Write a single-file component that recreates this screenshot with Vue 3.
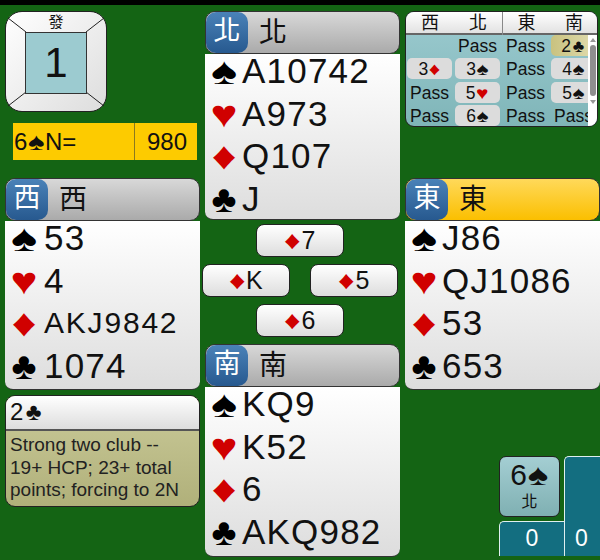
<script setup>
const north = [
  { s: "♠", c: "black", t: "A10742" },
  { s: "♥", c: "red", t: "A973" },
  { s: "♦", c: "red", t: "Q107" },
  { s: "♣", c: "black", t: "J" },
];
const west = [
  { s: "♠", c: "black", t: "53" },
  { s: "♥", c: "red", t: "4" },
  { s: "♦", c: "red", t: "AKJ9842", small: true },
  { s: "♣", c: "black", t: "1074" },
];
const east = [
  { s: "♠", c: "black", t: "J86" },
  { s: "♥", c: "red", t: "QJ1086" },
  { s: "♦", c: "red", t: "53" },
  { s: "♣", c: "black", t: "653" },
];
const south = [
  { s: "♠", c: "black", t: "KQ9" },
  { s: "♥", c: "red", t: "K52" },
  { s: "♦", c: "red", t: "6" },
  { s: "♣", c: "black", t: "AKQ982" },
];
const hands = { north, west, east, south };

const auction = [
  [{}, { t: "Pass" }, { t: "Pass" }, { n: "2", s: "♣", cur: true }],
  [{ n: "3", s: "♦", red: true }, { n: "3", s: "♠" }, { t: "Pass" }, { n: "4", s: "♠" }],
  [{ t: "Pass" }, { n: "5", s: "♥", red: true }, { t: "Pass" }, { n: "5", s: "♠" }],
  [{ t: "Pass" }, { n: "6", s: "♠" }, { t: "Pass" }, { t: "Pass" }],
];

const suitClass = { "♠": "sp", "♥": "he", "♦": "di", "♣": "cl" };
</script>

<template>
  <div class="table">
    <div class="col">
      <div class="dealer">
        <svg class="dealer-frame" width="102" height="102" viewBox="0 0 102 102">
          <path d="M3 7 L21 21 M99 7 L81 21 M3 95 L21 81 M99 95 L81 81" stroke="#222" stroke-width="1" />
        </svg>
        <div class="dealer-label">發</div>
        <div class="dealer-num">1</div>
      </div>
      <div class="contract">
        <span class="contract-name">6<span class="suit-s sp">♠</span>N=</span>
        <span class="contract-score">980</span>
      </div>
      <div class="hand west">
        <div class="hand-head">
          <span class="seat">西</span><span class="seat-name">西</span>
        </div>
        <div class="hand-body">
          <div v-for="r in hands.west" :key="r.s" class="suit-row">
            <span class="suit" :class="[r.c, suitClass[r.s]]">{{ r.s }}</span>
            <span class="cards" :class="{ small: r.small }">{{ r.t }}</span>
          </div>
        </div>
      </div>
      <div class="explain">
        <div class="explain-head">2<span class="suit-s cl">♣</span></div>
        <div class="explain-text">Strong two club -- 19+ HCP; 23+ total points; forcing to 2N</div>
      </div>
    </div>

    <div class="col mid">
      <div class="hand north">
        <div class="hand-head">
          <span class="seat">北</span><span class="seat-name">北</span>
        </div>
        <div class="hand-body">
          <div v-for="r in hands.north" :key="r.s" class="suit-row">
            <span class="suit" :class="[r.c, suitClass[r.s]]">{{ r.s }}</span>
            <span class="cards">{{ r.t }}</span>
          </div>
        </div>
      </div>
      <div class="trick">
        <div class="played"><span class="red suit-s di">♦</span>7</div>
        <div class="trick-mid">
          <div class="played"><span class="red suit-s di">♦</span>K</div>
          <div class="played"><span class="red suit-s di">♦</span>5</div>
        </div>
        <div class="played"><span class="red suit-s di">♦</span>6</div>
      </div>
      <div class="hand south">
        <div class="hand-head">
          <span class="seat">南</span><span class="seat-name">南</span>
        </div>
        <div class="hand-body">
          <div v-for="r in hands.south" :key="r.s" class="suit-row">
            <span class="suit" :class="[r.c, suitClass[r.s]]">{{ r.s }}</span>
            <span class="cards">{{ r.t }}</span>
          </div>
        </div>
      </div>
    </div>

    <div class="col right">
      <div class="auction">
        <div class="auction-head">
          <span>西</span><span>北</span><span class="divided">東</span><span>南</span>
        </div>
        <div class="auction-body">
          <div class="bids">
            <template v-for="(row, i) in auction" :key="i">
              <div
                v-for="(b, j) in row"
                :key="j"
                class="bid"
                :class="{ chip: b.n, cur: b.cur }"
              >
                <template v-if="b.n">{{ b.n }}<span class="suit-s" :class="[suitClass[b.s], { red: b.red }]">{{ b.s }}</span></template>
                <template v-else>{{ b.t }}</template>
              </div>
            </template>
          </div>
          <div class="scrollbar">
            <span class="arrow up"></span>
            <span class="thumb"></span>
            <span class="arrow down"></span>
          </div>
        </div>
      </div>
      <div class="hand east">
        <div class="hand-head active">
          <span class="seat">東</span><span class="seat-name">東</span>
        </div>
        <div class="hand-body">
          <div v-for="r in hands.east" :key="r.s" class="suit-row">
            <span class="suit" :class="[r.c, suitClass[r.s]]">{{ r.s }}</span>
            <span class="cards">{{ r.t }}</span>
          </div>
        </div>
      </div>
      <div class="bottom">
        <div class="bottom-left">
          <div class="final">
            <div class="final-bid">6<span class="suit-s sp">♠</span></div>
            <div class="final-by">北</div>
          </div>
          <div class="tricks-ns">0</div>
        </div>
        <div class="tricks-ew">0</div>
      </div>
    </div>
  </div>
</template>

<style>
html,
body {
  margin: 0;
  background: #146414;
  overflow: hidden;
}
</style>

<style scoped>
.table {
  display: flex;
  gap: 5px;
  width: 600px;
  height: 560px;
  box-sizing: border-box;
  padding: 6px 0 0 5px;
  overflow: hidden;
  background: #146414;
  border-top: 5px solid #000;
  font-family: "Liberation Sans", "Noto Sans CJK TC", sans-serif;
  color: #111;
}

.col {
  width: 195px;
  flex-shrink: 0;
  display: flex;
  flex-direction: column;
}

/* dealer box */
.dealer {
  position: relative;
  width: 102px;
  height: 101px;
  box-sizing: border-box;
  border: 1px solid #222;
  border-radius: 17px;
  background: linear-gradient(135deg, #fff, #ddd);
  display: flex;
  flex-direction: column;
  align-items: center;
}

.dealer-frame {
  position: absolute;
  left: -1px;
  top: -1px;
}

.dealer-label {
  height: 20px;
  font-size: 15px;
  line-height: 19px;
}

.dealer-num {
  position: relative;
  width: 60px;
  height: 60px;
  border: 1px solid #333;
  background: #9ccbd0;
  text-align: center;
  font-size: 42px;
  line-height: 60px;
}

.contract {
  display: flex;
  width: 184px;
  height: 37px;
  margin: 11px 0 18px 8px;
  background: #fdcb00;
  font-size: 24px;
  line-height: 37px;
}

.contract-name {
  width: 122px;
  padding-left: 1px;
  box-sizing: border-box;
  border-right: 1px solid #8a7a20;
}

.contract-score {
  flex: 1;
  text-align: center;
  padding-left: 2px;
}

/* Liberation's suit glyphs are narrower than the reference's */
.suit-s {
  display: inline-block;
  margin: 0 0.1em;
}

.sp,
.di {
  transform: scaleX(1.3);
}

.he {
  transform: scaleX(1.2);
}

/* hands */
.hand-head {
  display: flex;
  align-items: center;
  height: 43px;
  box-sizing: border-box;
  border: 1px solid #333;
  border-radius: 10px;
  background: linear-gradient(#d8d8d8, #aaa);
}

.hand-head.active {
  background: linear-gradient(#ffd95a, #fbbf00);
}

.seat {
  width: 42px;
  height: 41px;
  border-radius: 10px;
  background: linear-gradient(#4a82b8, #27598f);
  color: #fff;
  text-align: center;
  font-size: 27px;
  line-height: 39px;
}

.seat-name {
  margin-left: 11px;
  font-size: 28px;
  line-height: 38px;
}

.hand-body {
  height: 169px;
  box-sizing: border-box;
  background: linear-gradient(#fff, #ddd);
  border-radius: 0 0 8px 8px;
  padding-left: 5px;
  border-bottom: 1px solid #333;
}

.north .hand-body {
  height: 166px;
}

.south .hand-body {
  height: 170px;
}

.suit-row {
  display: flex;
  align-items: flex-start;
  height: 42.6px;
}

.suit {
  width: 28px;
  text-align: center;
  font-size: 38px;
  line-height: 34px;
}

.cards {
  margin-left: 4px;
  font-size: 35px;
  letter-spacing: 1.2px;
  line-height: 34px;
}

.west .cards {
  margin-left: 6px;
}

.cards.small {
  font-size: 30px;
  letter-spacing: 1.8px;
}

.black {
  color: #000;
}

.red {
  color: #d00000;
}

/* bid explanation */
.explain {
  margin-top: 5px;
  height: 112px;
  box-sizing: border-box;
  border: 1px solid #222;
  border-radius: 10px;
  overflow: hidden;
  background: linear-gradient(#cbcb9a, #b0b07a);
}

.explain-head {
  height: 33px;
  border-bottom: 2px solid #555;
  background: linear-gradient(#fff, #ddd);
  font-size: 24px;
  line-height: 31px;
  padding-left: 4px;
}

.explain-text {
  padding: 3px 12px 0 4px;
  font-size: 19px;
  line-height: 22.5px;
  color: #222;
}

/* trick */
.trick {
  height: 124px;
  width: 195px;
  margin-left: -3px;
  display: flex;
  flex-direction: column;
  align-items: center;
  padding-top: 4px;
  gap: 7px;
  box-sizing: border-box;
}

.trick-mid {
  display: flex;
  justify-content: space-between;
  flex-shrink: 0;
  width: 196px;
}

.played {
  width: 88px;
  height: 33px;
  flex-shrink: 0;
  box-sizing: border-box;
  border: 1px solid #222;
  border-radius: 8px;
  background: linear-gradient(#fff, #ddd);
  text-align: center;
  font-size: 25px;
  line-height: 31px;
}

/* auction */
.auction {
  height: 116px;
  width: 193px;
  border: 1px solid #222;
  box-sizing: border-box;
  border-radius: 9px;
  overflow: hidden;
  background: linear-gradient(#9ccbd0, #7fb5b8);
  margin-bottom: 51px;
}

.auction-head {
  display: grid;
  grid-template-columns: 48px 48px 48px 48px;
  height: 23px;
  box-sizing: border-box;
  border-bottom: 2px solid #666;
  background: linear-gradient(#fff, #e2e2e2);
  font-size: 18px;
  line-height: 23px;
  text-align: center;
}

.divided {
  border-left: 1px solid #888;
}

.auction-body {
  display: flex;
  height: 92px;
}

.bids {
  display: grid;
  grid-template-columns: 45px 45px 45px 45px;
  grid-auto-rows: 23.3px;
  column-gap: 3px;
  width: 182px;
  flex-shrink: 0;
  overflow: hidden;
  padding-left: 1px;
  box-sizing: border-box;
}

.bid {
  font-size: 17.5px;
  line-height: 22px;
  text-align: center;
  white-space: nowrap;
}

.bid.chip {
  height: 21px;
  line-height: 22px;
  border-radius: 5px;
  background: #dcdcdc;
}

.bid.cur {
  background: linear-gradient(90deg, #c9c27f, #e0dcb0);
}

.scrollbar {
  flex: 1;
  background: #fff;
  display: flex;
  flex-direction: column;
  align-items: center;
}

.arrow {
  width: 0;
  height: 0;
  margin: 3px 0;
  border-left: 3px solid transparent;
  border-right: 3px solid transparent;
}

.arrow.up {
  border-bottom: 4px solid #999;
}

.arrow.down {
  margin-top: 4px;
  border-top: 4px solid #999;
}

.thumb {
  width: 6px;
  height: 51px;
  border-radius: 3px;
  background: #8e8e8e;
}

/* bottom right */
.bottom {
  display: flex;
  margin: 66px 0 0 94px;
  align-items: flex-start;
}

.bottom-left {
  width: 62px;
}

.final {
  width: 61px;
  height: 61px;
  box-sizing: border-box;
  border: 1px solid #222;
  border-radius: 7px;
  background: linear-gradient(#a4ced3, #7fb0b2);
  text-align: center;
}

.final-bid {
  font-size: 30px;
  line-height: 35px;
}

.final-by {
  font-size: 16px;
  line-height: 20px;
}

.tricks-ns {
  width: 65px;
  height: 35px;
  margin-top: 4px;
  box-sizing: border-box;
  border: 1px solid #e0f0f0;
  border-width: 1px 0 0 1px;
  border-radius: 5px 0 0 0;
  background: #136e80;
  color: #fff;
  text-align: center;
  font-size: 23px;
  line-height: 33px;
}

.tricks-ew {
  width: 36px;
  height: 100px;
  margin-left: 3px;
  box-sizing: border-box;
  border: 1px solid #e0f0f0;
  border-width: 1px 0 0 1px;
  border-radius: 5px 0 0 0;
  background: #136e80;
  color: #fff;
  padding-top: 64px;
  padding-left: 10px;
  font-size: 23px;
  line-height: 34px;
}
</style>
